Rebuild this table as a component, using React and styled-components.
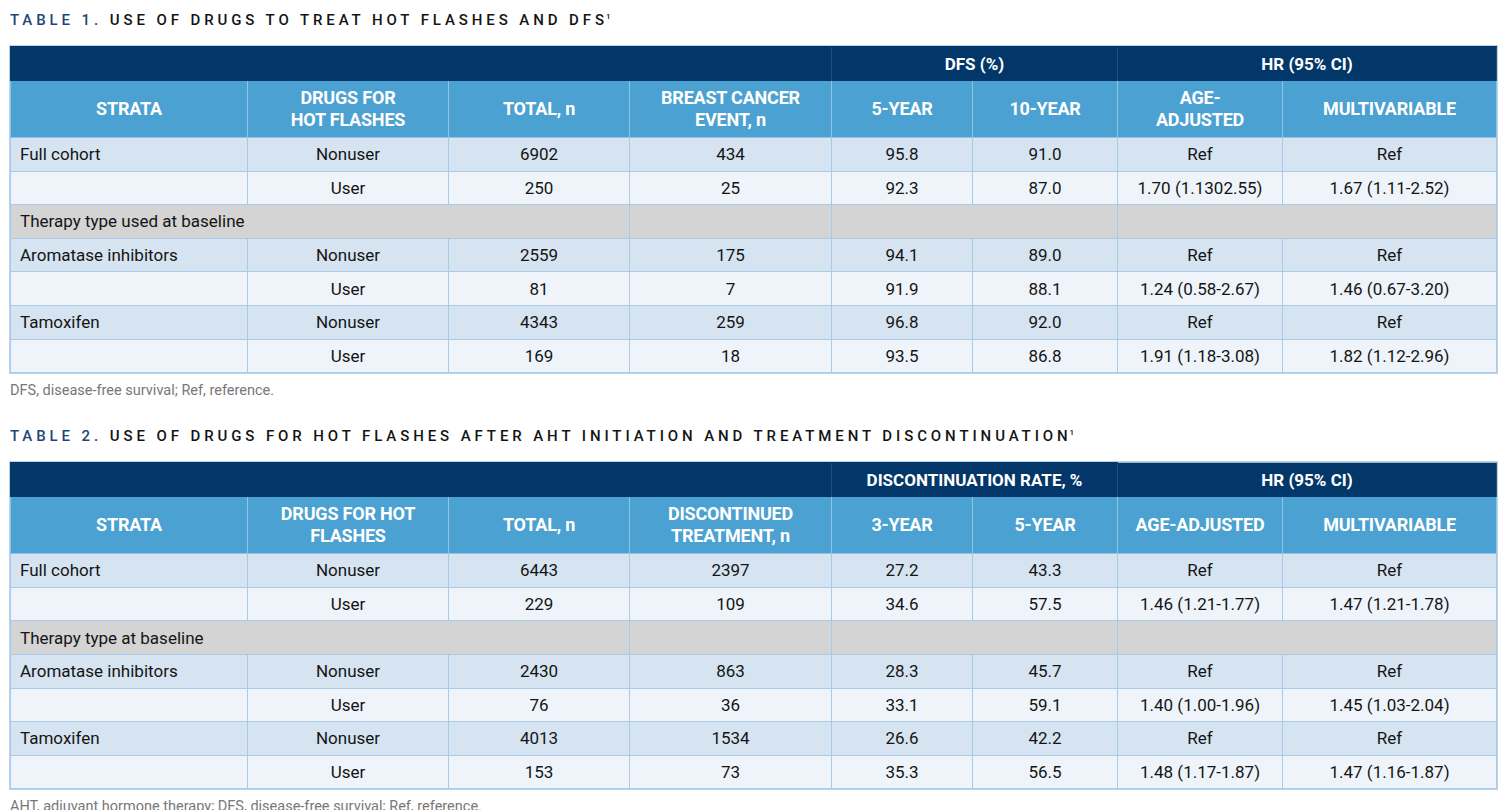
import React from 'react';
import styled, { createGlobalStyle } from 'styled-components';

const GlobalStyle = createGlobalStyle`
  html, body {
    margin: 0;
    padding: 0;
    background: #ffffff;
  }
  body {
    font-family: Roboto, "Liberation Sans", sans-serif;
    color: #1a1a1a;
  }
`;

const COLS = [237, 201, 181, 202, 141, 145, 165, 214];

const table1 = {
  title: 'USE OF DRUGS TO TREAT HOT FLASHES AND DFS',
  num: '1',
  group: 'DFS (%)',
  heads: [
    'STRATA',
    ['DRUGS FOR', 'HOT FLASHES'],
    'TOTAL, n',
    ['BREAST CANCER', 'EVENT, n'],
    '5-YEAR',
    '10-YEAR',
    ['AGE-', 'ADJUSTED'],
    'MULTIVARIABLE',
  ],
  section: 'Therapy type used at baseline',
  top: [
    ['Full cohort', 'Nonuser', '6902', '434', '95.8', '91.0', 'Ref', 'Ref'],
    ['', 'User', '250', '25', '92.3', '87.0', '1.70 (1.1302.55)', '1.67 (1.11-2.52)'],
  ],
  bottom: [
    ['Aromatase inhibitors', 'Nonuser', '2559', '175', '94.1', '89.0', 'Ref', 'Ref'],
    ['', 'User', '81', '7', '91.9', '88.1', '1.24 (0.58-2.67)', '1.46 (0.67-3.20)'],
    ['Tamoxifen', 'Nonuser', '4343', '259', '96.8', '92.0', 'Ref', 'Ref'],
    ['', 'User', '169', '18', '93.5', '86.8', '1.91 (1.18-3.08)', '1.82 (1.12-2.96)'],
  ],
  note: 'DFS, disease-free survival; Ref, reference.',
};

const table2 = {
  title: 'USE OF DRUGS FOR HOT FLASHES AFTER AHT INITIATION AND TREATMENT DISCONTINUATION',
  num: '2',
  group: 'DISCONTINUATION RATE, %',
  hrLine: true,
  heads: [
    'STRATA',
    ['DRUGS FOR HOT', 'FLASHES'],
    'TOTAL, n',
    ['DISCONTINUED', 'TREATMENT, n'],
    '3-YEAR',
    '5-YEAR',
    'AGE-ADJUSTED',
    'MULTIVARIABLE',
  ],
  section: 'Therapy type at baseline',
  top: [
    ['Full cohort', 'Nonuser', '6443', '2397', '27.2', '43.3', 'Ref', 'Ref'],
    ['', 'User', '229', '109', '34.6', '57.5', '1.46 (1.21-1.77)', '1.47 (1.21-1.78)'],
  ],
  bottom: [
    ['Aromatase inhibitors', 'Nonuser', '2430', '863', '28.3', '45.7', 'Ref', 'Ref'],
    ['', 'User', '76', '36', '33.1', '59.1', '1.40 (1.00-1.96)', '1.45 (1.03-2.04)'],
    ['Tamoxifen', 'Nonuser', '4013', '1534', '26.6', '42.2', 'Ref', 'Ref'],
    ['', 'User', '153', '73', '35.3', '56.5', '1.48 (1.17-1.87)', '1.47 (1.16-1.87)'],
  ],
  note: 'AHT, adjuvant hormone therapy; DFS, disease-free survival; Ref, reference.',
};

const Page = styled.main`
  padding: 10px 16px 0 10px;
`;

const Block = styled.section`
  display: flex;
  flex-direction: column;
  & + & {
    margin-top: 27px;
  }
`;

const Title = styled.h2`
  margin: 0 0 16px;
  height: 20px;
  line-height: 20px;
  font-family: Roboto, "Liberation Sans", sans-serif;
  font-size: 15px;
  font-weight: 500;
  letter-spacing: 3.9px;
  color: #141414;
  white-space: nowrap;
`;

const TitleNum = styled.span`
  color: #1d4774;
`;

const Sup = styled.sup`
  font-size: 8px;
  letter-spacing: 0;
  vertical-align: 6px;
  line-height: 0;
  margin-left: -2px;
`;

const Table = styled.table`
  width: 1486px;
  table-layout: fixed;
  border-collapse: collapse;
  border: 1px solid #2f5179;
  border-top: none;
  box-shadow: 0 0 0 1px #b9d3ea;
  font-family: Roboto, "Liberation Sans", sans-serif;
`;

const GroupRow = styled.tr`
  height: 34px;
  background: #043769;
`;

const GroupCell = styled.th`
  padding: 0;
  color: #ffffff;
  font-size: 17px;
  font-weight: 700;
  text-align: center;
  border-left: 1px solid ${(p) => (p.$first ? '#043769' : '#1f4c7c')};
  border-top: 1px solid ${(p) => (p.$line ? '#9fb3c8' : '#043769')};
`;

const HeadRow = styled.tr`
  height: 57px;
  background: #4ba1d1;
`;

const HeadCell = styled.th`
  padding: 0 6px;
  color: #ffffff;
  font-size: 18px;
  font-weight: 700;
  line-height: 22px;
  letter-spacing: -0.2px;
  text-align: center;
  border: 1px solid #8ec5e6;
  border-top: none;
`;

const BodyRow = styled.tr`
  height: 33.6px;
  background: ${(p) => (p.$shade ? '#d6e4f1' : '#eef4fa')};
`;

const SectionRow = styled.tr`
  height: 33.6px;
  background: #d4d4d4;
`;

const Cell = styled.td`
  padding: 0 9px;
  font-size: 17px;
  color: #141414;
  text-align: ${(p) => (p.$left ? 'left' : 'center')};
  border: 1px solid #a9cbe7;
  white-space: nowrap;
`;

const Note = styled.p`
  margin: 10px 0 0;
  font-family: Roboto, "Liberation Sans", sans-serif;
  font-size: 14.5px;
  line-height: 16px;
  color: #777777;
`;

const Lines = ({ text }) =>
  Array.isArray(text) ? (
    <>
      {text[0]}
      <br />
      {text[1]}
    </>
  ) : (
    text
  );

const DataRows = ({ rows }) =>
  rows.map((row, i) => (
    <BodyRow key={i} $shade={i % 2 === 0}>
      {row.map((v, j) => (
        <Cell key={j} $left={j === 0}>
          {v}
        </Cell>
      ))}
    </BodyRow>
  ));

const DataTable = ({ data }) => (
  <Block>
    <Title>
      <TitleNum>TABLE {data.num}.</TitleNum> {data.title}
      <Sup>1</Sup>
    </Title>
    <Table>
      <colgroup>
        {COLS.map((w, i) => (
          <col key={i} style={{ width: w }} />
        ))}
      </colgroup>
      <thead>
        <GroupRow>
          <GroupCell colSpan={4} $first />
          <GroupCell colSpan={2}>{data.group}</GroupCell>
          <GroupCell colSpan={2} $line={data.hrLine}>
            HR (95% CI)
          </GroupCell>
        </GroupRow>
        <HeadRow>
          {data.heads.map((h, i) => (
            <HeadCell key={i}>
              <Lines text={h} />
            </HeadCell>
          ))}
        </HeadRow>
      </thead>
      <tbody>
        <DataRows rows={data.top} />
        <SectionRow>
          <Cell colSpan={3} $left>
            {data.section}
          </Cell>
          <Cell />
          <Cell colSpan={2} />
          <Cell colSpan={2} />
        </SectionRow>
        <DataRows rows={data.bottom} />
      </tbody>
    </Table>
    <Note>{data.note}</Note>
  </Block>
);

export default function App() {
  return (
    <>
      <GlobalStyle />
      <Page>
        <DataTable data={table1} />
        <DataTable data={table2} />
      </Page>
    </>
  );
}
